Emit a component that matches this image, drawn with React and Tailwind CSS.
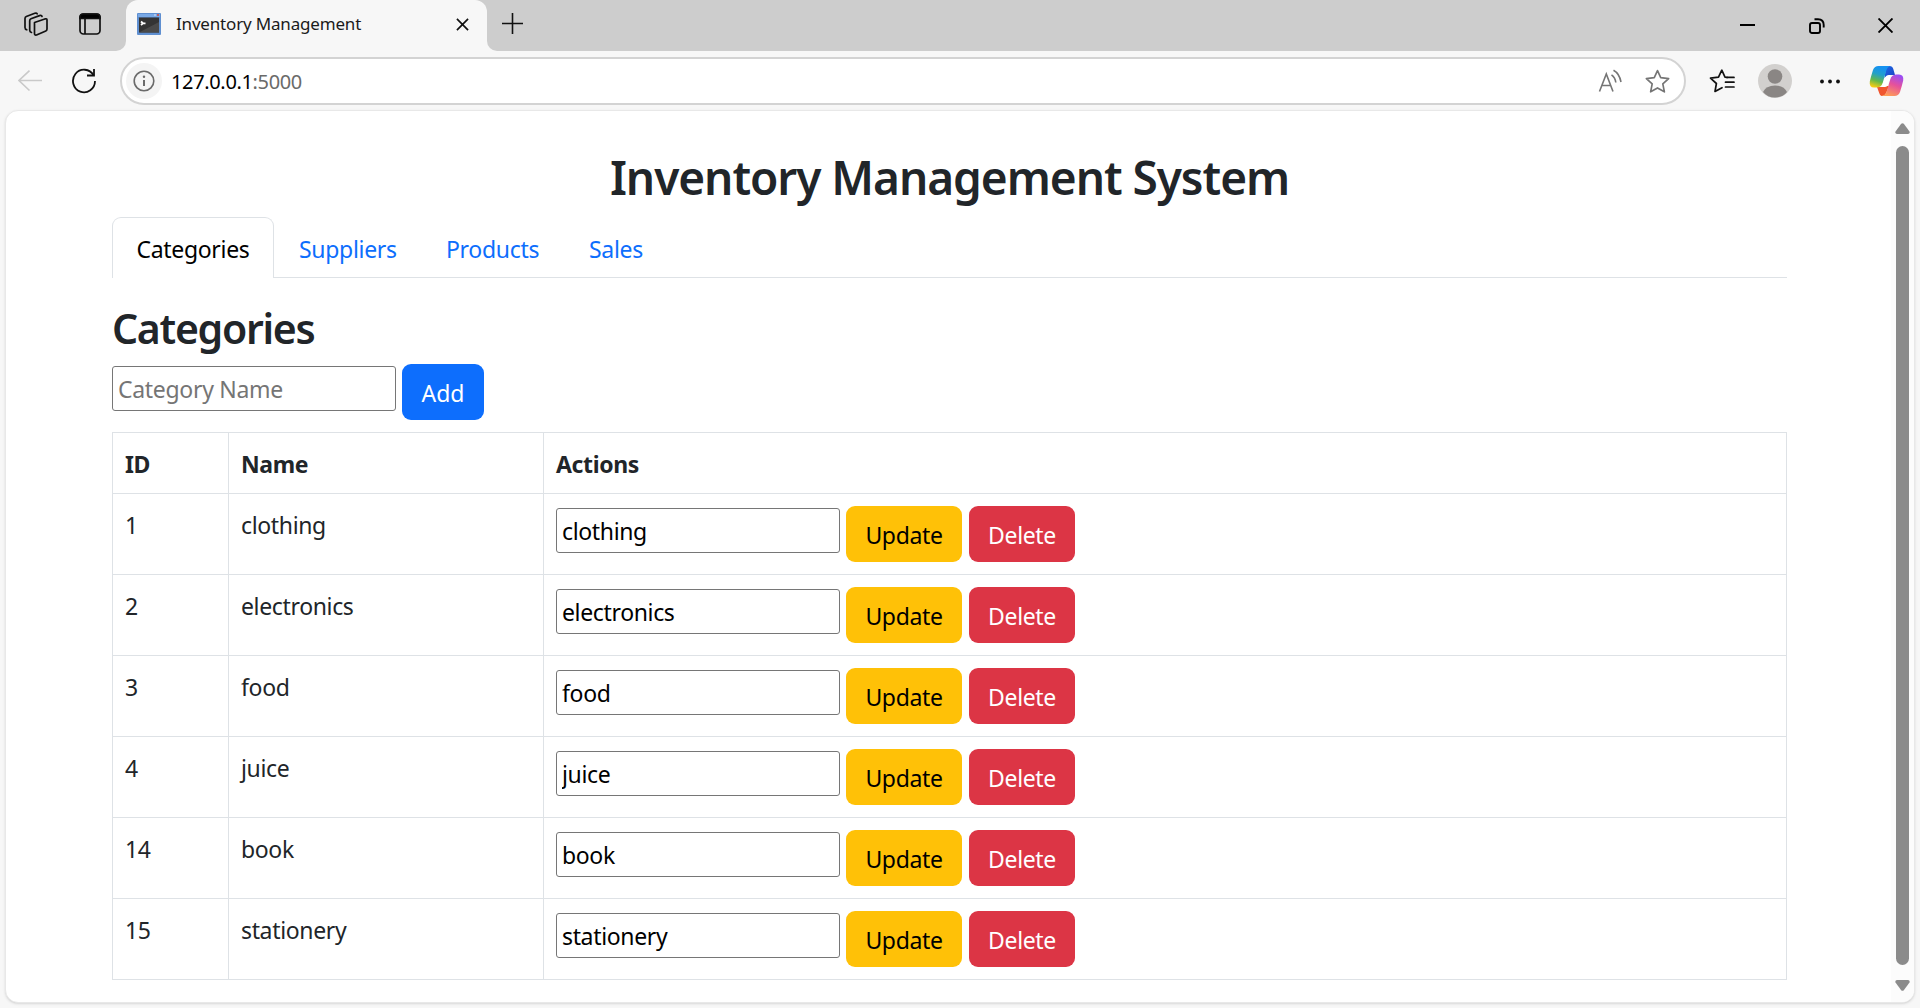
const rows = [
  [1, 'clothing'],
  [2, 'electronics'],
  [3, 'food'],
  [4, 'juice'],
  [14, 'book'],
  [15, 'stationery'],
];

function TabBar() {
  return (
    <div className="flex h-[51px] shrink-0 bg-[#f7f7f7]">
      <div className="flex w-[126px] items-start rounded-br-[10px] bg-[#cdcdcd] pl-[23px] pt-[11px]">
        <svg width="26" height="26" viewBox="0 0 26 26" fill="none" stroke="#111" strokeWidth="1.7" strokeLinejoin="round" strokeLinecap="round">
          <path d="M11.5 11.5 L22.5 7.8 Q24 7.5 24 9 V18 Q24 19.5 22.8 20 L13.5 24 Q11.5 24.5 11.5 22.5 Z" />
          <path d="M8.5 21.5 Q6.7 21 6.7 19.3 V9.8 Q6.7 8.3 8 7.8 L16.5 4.6 Q18.6 4 19 5.5" />
          <path d="M3.8 18.8 Q2 18.3 2 16.5 V7.5 Q2 6 3.3 5.5 L11.8 2.2 Q13.6 1.7 14.2 2.8" />
        </svg>
        <svg className="ml-[30px] mt-[2px]" width="22" height="22" viewBox="0 0 22 22" fill="none" stroke="#111" strokeWidth="1.7">
          <rect x="1" y="1" width="20" height="20" rx="3.5" />
          <path d="M1 4 Q1 1 4 1 H18 Q21 1 21 4 V5.500 H1 Z" fill="#000" />
          <path d="M6 6 V21" />
        </svg>
      </div>
      <div className="flex w-[361px] bg-linear-to-b from-[#cdcdcd] from-50% to-[#f7f7f7] to-50%">
        <div className="flex flex-1 items-start rounded-t-[12px] bg-[#f7f7f7] pl-[11px]">
          <svg className="mt-[13px]" width="24" height="22" viewBox="0 0 24 22">
            <rect width="24" height="22" rx="1" fill="#5f8fd0" />
            <rect x="1" y="1" width="22" height="3" fill="#79a9e6" />
            <rect x="2" y="4.5" width="20" height="15" fill="#343434" />
            <path d="M2 19.500 L22 9 V19.500 Z" fill="#4a4a4a" />
            <path d="M17 2 h2" stroke="#d8e6f8" strokeWidth="1.200" />
            <path d="M20 2 h2" stroke="#d8452f" strokeWidth="1.600" />
            <path d="M4 8.500 L6 10.300 L4 12 M6.500 10.300 h2" stroke="#fff" strokeWidth="1.800" fill="none" />
          </svg>
          <span className="ml-[15px] mt-[12px] w-[270px] whitespace-nowrap text-[17px] leading-[24px] tracking-[-0.18px] text-[#1b1b1b]">Inventory Management</span>
          <svg className="ml-[10px] mt-[18px] shrink-0" width="13" height="13" viewBox="0 0 14 14" stroke="#111" strokeWidth="1.8">
            <path d="M1 1 L13 13 M13 1 L1 13" />
          </svg>
        </div>
      </div>
      <div className="flex flex-1 items-start rounded-bl-[10px] bg-[#cdcdcd]">
        <svg className="ml-[15px] mt-[13px]" width="21" height="21" viewBox="0 0 21 21" stroke="#111" strokeWidth="1.6">
          <path d="M10.500 0 V21 M0 10.500 H21" />
        </svg>
        <svg className="ml-auto mt-[24px]" width="15" height="2" viewBox="0 0 15 2">
          <rect width="15" height="2" fill="#000" />
        </svg>
        <svg className="ml-[54px] mt-[18px]" width="16" height="16" viewBox="0 0 16 16" fill="none" stroke="#000" strokeWidth="1.9">
          <rect x="1" y="5" width="10" height="10" rx="2" />
          <path d="M5.500 1.200 H9 Q14.700 1.200 14.700 7 V9.500" />
        </svg>
        <svg className="ml-[53px] mr-[27px] mt-[18px]" width="15" height="15" viewBox="0 0 15 15" stroke="#000" strokeWidth="1.9">
          <path d="M0.500 0.500 L14.500 14.500 M14.500 0.500 L0.500 14.500" />
        </svg>
      </div>
    </div>
  );
}

function Toolbar() {
  return (
    <div className="flex h-[59px] shrink-0 items-start">
      <svg className="ml-[18px] mt-[19px]" width="24" height="22" viewBox="0 0 24 22" fill="none" stroke="#c9c9c9" strokeWidth="1.6">
        <path d="M24 10.500 H1 M11.500 0.700 L1 10.500 L11.500 20.500" />
      </svg>
      <svg className="ml-[30px] mt-[17px]" width="24" height="26" viewBox="0 0 24 26" fill="none" stroke="#111" strokeWidth="1.8">
        <path d="M21.500 7.300 A11 11.300 0 1 0 23 13" />
        <path d="M22 1 V7.500 H15" />
      </svg>
      <div className="ml-[24px] mt-[6px] flex h-[48px] w-[1566px] items-center rounded-full border-2 border-[#d3d3d3] bg-white pl-[4px] pr-[14px]">
        <div className="flex h-[36px] w-[36px] items-center justify-center rounded-full bg-[#f4f4f4]">
          <svg width="22" height="22" viewBox="0 0 22 22" fill="none" stroke="#6a6a6a" strokeWidth="1.6">
            <circle cx="11" cy="11" r="9.800" />
            <path d="M11 10 V16" strokeWidth="2" />
            <circle cx="11" cy="6.800" r="1.200" fill="#6a6a6a" stroke="none" />
          </svg>
        </div>
        <span className="ml-[9px] mt-px text-[20px] leading-[28px] tracking-[-0.35px] text-black">
          127.0.0.1<span className="text-[#6a6a6a]">:5000</span>
        </span>
        <svg className="ml-auto" width="24" height="24" viewBox="0 0 24 24" fill="none" stroke="#757575" strokeWidth="1.600">
          <path d="M1.500 22.500 L8.300 5 L15 22.500 M4 16.500 H12.700" />
          <path d="M13.500 5.800 Q17.300 8.500 17.800 13.500 M15.500 1.200 Q21.500 4.500 23 13" />
        </svg>
        <svg className="ml-[23px]" width="25" height="25" viewBox="0 0 24 24" fill="none" stroke="#757575" strokeWidth="1.6" strokeLinejoin="round">
          <path d="M12 1.500 L15.100 8.300 L22.700 9.200 L17.100 14.300 L18.600 21.900 L12 18.200 L5.400 21.900 L6.900 14.300 L1.300 9.200 L8.900 8.300 Z" />
        </svg>
      </div>
      <svg className="ml-[23px] mt-[18px]" width="26" height="24" viewBox="0 0 26 24" fill="none" stroke="#111" strokeWidth="1.700" strokeLinejoin="round" strokeLinecap="round">
        <path d="M18.500 8.500 L16 8.200 L12.800 1.200 L9.500 8.200 L1.500 9.200 L7.400 14.500 L6 22.500 L13 18.700" />
        <path d="M18 8.400 H25 M16.500 13.200 H25 M16.500 18 H25" />
      </svg>
      <svg className="ml-[23px] mt-[13px]" width="34" height="34" viewBox="0 0 34 34">
        <circle cx="17" cy="17" r="17" fill="#d2d0ce" />
        <circle cx="17" cy="12.500" r="7.300" fill="#8a8684" />
        <path d="M5 28 Q8 21.500 17 21.500 Q26 21.500 29 28 Q24.500 33.500 17 33.500 Q9.500 33.500 5 28 Z" fill="#8a8684" />
      </svg>
      <svg className="ml-[28px] mt-[28px]" width="20" height="5" viewBox="0 0 20 5" fill="#111">
        <circle cx="2" cy="2.500" r="1.900" />
        <circle cx="10" cy="2.500" r="1.900" />
        <circle cx="18" cy="2.500" r="1.900" />
      </svg>
      <svg className="ml-[29px] mt-[14px]" width="35" height="32" viewBox="0 0 35 32">
        <defs>
          <linearGradient id="left" x1="0.600" y1="0" x2="0.300" y2="1">
            <stop offset="0.100" stopColor="#1692f0" />
            <stop offset="0.400" stopColor="#22a0c8" />
            <stop offset="0.700" stopColor="#62b84c" />
            <stop offset="1" stopColor="#f7cc12" />
          </linearGradient>
          <linearGradient id="right" x1="0.700" y1="0" x2="0.300" y2="1">
            <stop offset="0" stopColor="#9a4df5" />
            <stop offset="0.450" stopColor="#e6519b" />
            <stop offset="1" stopColor="#ffa055" />
          </linearGradient>
          <linearGradient id="fold" x1="0" y1="0" x2="1" y2="1">
            <stop offset="0" stopColor="#1d6ce8" />
            <stop offset="1" stopColor="#1b3fc0" />
          </linearGradient>
        </defs>
        <path d="M17 1 H20.500 Q23.500 1 24.300 4 L26 10 H21 Q18 10 15.500 13 Z" fill="url(#fold)" />
        <path d="M8 22 H13 L17 21 H20 L18 26 Q16.500 31 12.500 31 Q10.800 30.500 10.200 28 Z" fill="#f0562f" />
        <path d="M9.500 1 H21.500 Q18.500 1.500 17.300 5.500 L13.800 17.500 Q12.300 22.500 7.500 22.500 H5 Q0 22.500 0.800 16.500 Q2.200 10.500 4 5 Q5.500 1 9.500 1 Z" fill="url(#left)" />
        <path d="M25.500 31 H12.500 Q16.500 30.500 17.700 26.500 L21.200 14.500 Q22.700 9.500 27.500 9.500 H30 Q35 9.500 34.200 15.500 Q32.800 21.500 31 27 Q29.500 31 25.500 31 Z" fill="url(#right)" />
        <path d="M21.500 10 H20 Q17 10 16 12.500 L14 18.500 Q13.300 21 12 22 H16 Q18 22 18.700 20 L21 14 Z" fill="#fff" />
      </svg>
    </div>
  );
}

function Button({ className, children }) {
  return <button className={'h-[56px] shrink-0 rounded-[9px] pb-px pt-[3px] text-center text-[23px] leading-[36px] ' + className}>{children}</button>;
}

const field =
  'mt-[2px] h-[45px] w-[284px] shrink-0 rounded-[3px] border border-[#767676] bg-white px-[5px] text-[23px] text-black placeholder:text-[#757575] outline-none';

function ScrollBar() {
  return (
    <div className="flex w-[23px] shrink-0 flex-col items-center bg-[#fcfcfc] pt-[12px]">
      <svg width="15" height="11" viewBox="0 0 15 11" fill="#8b8b8b">
        <path d="M6.200 0.800 Q7.500 -0.500 8.800 0.800 L14.500 8.500 Q15.200 10.800 13 11 H2 Q-0.200 10.800 0.500 8.500 Z" />
      </svg>
      <div className="mt-[12px] h-[819px] w-[13px] rounded-full bg-[#8b8b8b]" />
      <svg className="mt-[15px]" width="15" height="11" viewBox="0 0 15 11" fill="#8b8b8b">
        <path d="M6.200 10.200 Q7.500 11.500 8.800 10.200 L14.500 2.500 Q15.200 0.200 13 0 H2 Q-0.200 0.200 0.500 2.500 Z" />
      </svg>
    </div>
  );
}

export default function App() {
  return (
    <div className="flex h-[1008px] w-[1920px] flex-col overflow-hidden bg-[#f7f7f7] font-['Noto_Sans',sans-serif]">
      <TabBar />
      <Toolbar />
      <div className="ml-[5px] flex h-[893px] w-[1910px] shrink-0 overflow-hidden rounded-[13px] border border-[#e8e8e8] bg-white shadow-sm">
        <main className="flex-1 pl-[106px] pr-[104px] pt-[36px] text-[23px] text-[#212529]">
          <h1 className="h-[58px] whitespace-nowrap pt-px text-center text-[46px] font-semibold leading-[58px] tracking-[-1.05px]">Inventory Management System</h1>
          <nav className="mt-[12px] flex h-[61px] w-[1675px] border-b border-[#dee2e6] leading-[36px] tracking-[-0.3px] text-[#0d6efd]">
            <a className="-mb-px h-[61px] w-[162px] rounded-t-[9px] border border-b-0 border-[#dee2e6] bg-white pt-[13px] text-center text-black">Categories</a>
            <a className="ml-[25px] w-[147px] pt-[14px]">Suppliers</a>
            <a className="w-[143px] pt-[14px]">Products</a>
            <a className="pt-[14px]">Sales</a>
          </nav>
          <h2 className="mt-[25px] h-[50px] whitespace-nowrap text-[41px] font-semibold leading-[50px] tracking-[-1.3px]">Categories</h2>
          <div className="mt-[11px] flex items-start">
            <input className={field + ' tracking-[-0.3px]'} placeholder="Category Name" />
            <Button className="ml-[6px] w-[82px] bg-[#0d6efd] text-white">Add</Button>
          </div>
          <table className="mt-[12px] w-[1675px] table-fixed border-collapse text-left tracking-[-0.35px]">
            <colgroup>
              <col className="w-[116px]" />
              <col className="w-[315px]" />
              <col />
            </colgroup>
            <thead>
              <tr className="h-[61px]">
                {['ID', 'Name', 'Actions'].map((h) => (
                  <th key={h} className="border border-[#dee2e6] px-[12px] pb-0 pt-px font-bold leading-[36px]">{h}</th>
                ))}
              </tr>
            </thead>
            <tbody>
              {rows.map(([id, name]) => (
                <tr key={id} className="h-[81px]">
                  <td className="border border-[#dee2e6] px-[12px] pt-[13px] align-top leading-[36px]">{id}</td>
                  <td className="border border-[#dee2e6] px-[12px] pt-[13px] align-top leading-[36px]">{name}</td>
                  <td className="border border-[#dee2e6] px-[12px] align-middle">
                    <div className="flex items-start">
                      <input className={field} defaultValue={name} />
                      <Button className="ml-[6px] w-[116px] bg-[#ffc107] text-black">Update</Button>
                      <Button className="ml-[7px] w-[106px] bg-[#dc3545] text-white">Delete</Button>
                    </div>
                  </td>
                </tr>
              ))}
            </tbody>
          </table>
        </main>
        <ScrollBar />
      </div>
    </div>
  );
}
